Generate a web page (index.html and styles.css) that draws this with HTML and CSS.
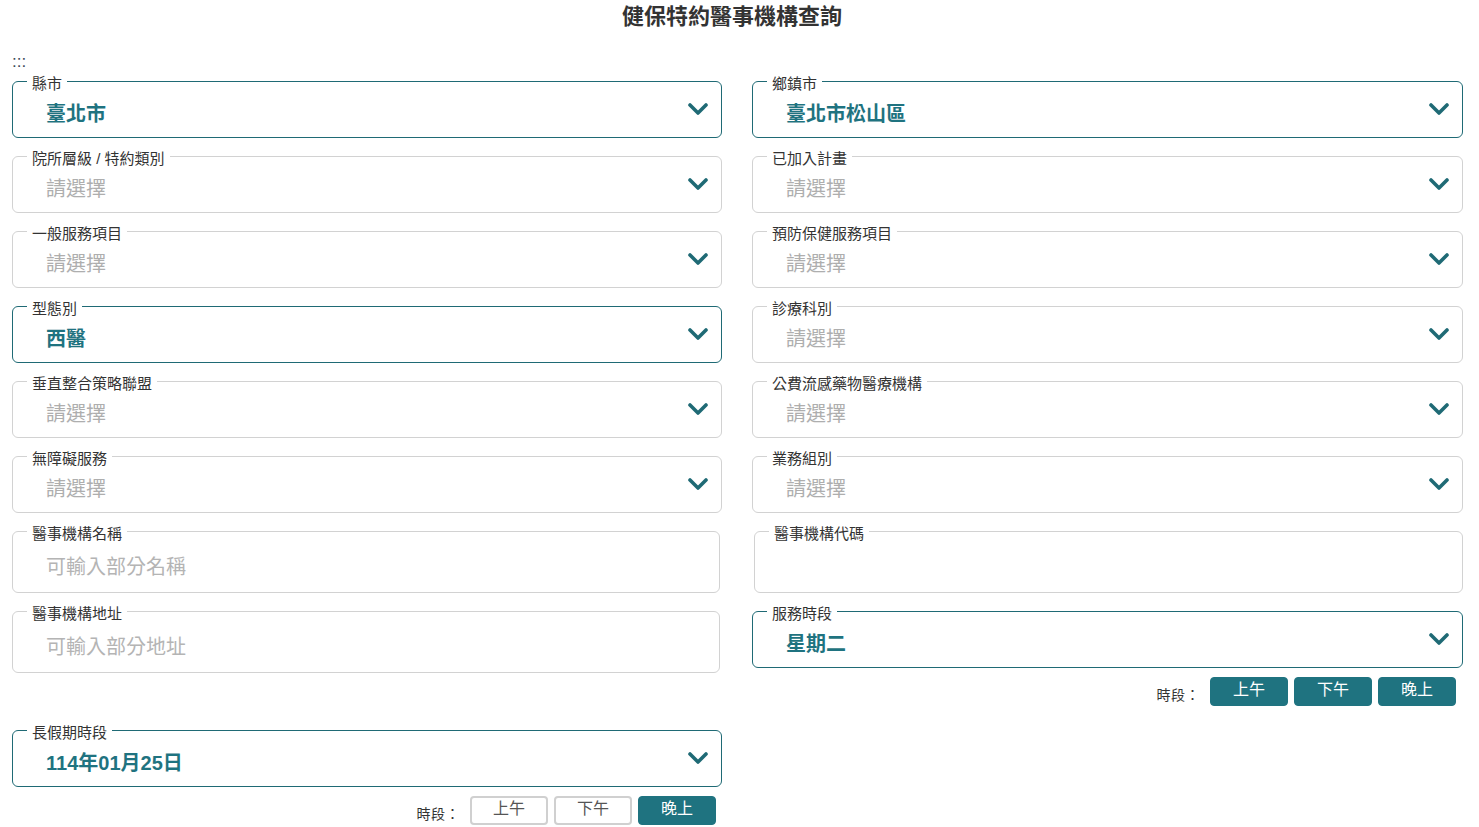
FILE: index.html
```html
<!DOCTYPE html>
<html lang="zh-Hant">
<head>
<meta charset="utf-8">
<title>健保特約醫事機構查詢</title>
<link rel="stylesheet" href="styles.css">
</head>
<body>
<div class="page">
  <h1 class="title">健保特約醫事機構查詢</h1>
  <div class="dots">:::</div>
  <div class="form">
    <fieldset class="field field-sel active">
      <legend>縣市</legend>
      <div class="row"><span class="val">臺北市</span><svg class="chev" viewBox="0 0 20 12" width="20" height="12"><polyline points="2,2 10,10 18,2"/></svg></div>
    </fieldset>
    <fieldset class="field field-sel active">
      <legend>鄉鎮市</legend>
      <div class="row"><span class="val">臺北市松山區</span><svg class="chev" viewBox="0 0 20 12" width="20" height="12"><polyline points="2,2 10,10 18,2"/></svg></div>
    </fieldset>

    <fieldset class="field field-sel">
      <legend>院所層級 / 特約類別</legend>
      <div class="row"><span class="ph">請選擇</span><svg class="chev" viewBox="0 0 20 12" width="20" height="12"><polyline points="2,2 10,10 18,2"/></svg></div>
    </fieldset>
    <fieldset class="field field-sel">
      <legend>已加入計畫</legend>
      <div class="row"><span class="ph">請選擇</span><svg class="chev" viewBox="0 0 20 12" width="20" height="12"><polyline points="2,2 10,10 18,2"/></svg></div>
    </fieldset>

    <fieldset class="field field-sel">
      <legend>一般服務項目</legend>
      <div class="row"><span class="ph">請選擇</span><svg class="chev" viewBox="0 0 20 12" width="20" height="12"><polyline points="2,2 10,10 18,2"/></svg></div>
    </fieldset>
    <fieldset class="field field-sel">
      <legend>預防保健服務項目</legend>
      <div class="row"><span class="ph">請選擇</span><svg class="chev" viewBox="0 0 20 12" width="20" height="12"><polyline points="2,2 10,10 18,2"/></svg></div>
    </fieldset>

    <fieldset class="field field-sel active">
      <legend>型態別</legend>
      <div class="row"><span class="val">西醫</span><svg class="chev" viewBox="0 0 20 12" width="20" height="12"><polyline points="2,2 10,10 18,2"/></svg></div>
    </fieldset>
    <fieldset class="field field-sel">
      <legend>診療科別</legend>
      <div class="row"><span class="ph">請選擇</span><svg class="chev" viewBox="0 0 20 12" width="20" height="12"><polyline points="2,2 10,10 18,2"/></svg></div>
    </fieldset>

    <fieldset class="field field-sel">
      <legend>垂直整合策略聯盟</legend>
      <div class="row"><span class="ph">請選擇</span><svg class="chev" viewBox="0 0 20 12" width="20" height="12"><polyline points="2,2 10,10 18,2"/></svg></div>
    </fieldset>
    <fieldset class="field field-sel">
      <legend>公費流感藥物醫療機構</legend>
      <div class="row"><span class="ph">請選擇</span><svg class="chev" viewBox="0 0 20 12" width="20" height="12"><polyline points="2,2 10,10 18,2"/></svg></div>
    </fieldset>

    <fieldset class="field field-sel">
      <legend>無障礙服務</legend>
      <div class="row"><span class="ph">請選擇</span><svg class="chev" viewBox="0 0 20 12" width="20" height="12"><polyline points="2,2 10,10 18,2"/></svg></div>
    </fieldset>
    <fieldset class="field field-sel">
      <legend>業務組別</legend>
      <div class="row"><span class="ph">請選擇</span><svg class="chev" viewBox="0 0 20 12" width="20" height="12"><polyline points="2,2 10,10 18,2"/></svg></div>
    </fieldset>

    <fieldset class="field field-text left-text">
      <legend>醫事機構名稱</legend>
      <input class="inp" type="text" placeholder="可輸入部分名稱">
    </fieldset>
    <fieldset class="field field-text right-text">
      <legend>醫事機構代碼</legend>
      <input class="inp" type="text">
    </fieldset>

    <fieldset class="field field-text left-text">
      <legend>醫事機構地址</legend>
      <input class="inp" type="text" placeholder="可輸入部分地址">
    </fieldset>
    <div class="cell">
      <fieldset class="field field-sel active">
        <legend>服務時段</legend>
        <div class="row"><span class="val">星期二</span><svg class="chev" viewBox="0 0 20 12" width="20" height="12"><polyline points="2,2 10,10 18,2"/></svg></div>
      </fieldset>
      <div class="bar bar-right">
        <span class="bar-label">時段：</span>
        <button class="btn on">上午</button>
        <button class="btn on">下午</button>
        <button class="btn on">晚上</button>
      </div>
    </div>

    <div class="cell">
      <fieldset class="field field-sel active">
        <legend>長假期時段</legend>
        <div class="row"><span class="val">114年01月25日</span><svg class="chev" viewBox="0 0 20 12" width="20" height="12"><polyline points="2,2 10,10 18,2"/></svg></div>
      </fieldset>
      <div class="bar bar-left">
        <span class="bar-label">時段：</span>
        <button class="btn off">上午</button>
        <button class="btn off">下午</button>
        <button class="btn on">晚上</button>
      </div>
    </div>
    <div class="cell"></div>
  </div>
</div>
</body>
</html>
```

FILE: styles.css
```css
* { box-sizing: border-box; }
html, body { margin: 0; padding: 0; background: #fff; }
body {
  font-family: "Liberation Sans", "Noto Sans CJK TC", sans-serif;
  color: #333;
}
.page {
  padding: 0 16px 0 12px;
}
.title {
  margin: 0;
  padding: 5px 11px 0 0;
  font-size: 22px;
  line-height: 24px;
  font-weight: bold;
  text-align: center;
  color: #333;
}
.dots {
  margin-top: 25px;
  margin-bottom: 1px;
  font-size: 17px;
  line-height: 16px;
  letter-spacing: 0;
  color: #3d4b5a;
}
.form {
  display: grid;
  grid-template-columns: 710px 711px;
  column-gap: 30px;
  row-gap: 8px;
  align-items: start;
}
.field {
  margin: 0;
  padding: 0;
  border: 1px solid #d2d2d2;
  border-radius: 6px;
  min-width: 0;
}
.field.active {
  border-color: #1f6a75;
}
.field legend {
  margin-left: 14px;
  padding: 4px 5px 0;
  font-size: 15px;
  line-height: 17px;
  color: #333;
}
.field-sel .row {
  display: flex;
  align-items: center;
  justify-content: space-between;
  padding: 7px 13px 8px 33px;
  height: 45px;
}
.val {
  font-size: 20px;
  line-height: 30px;
  font-weight: bold;
  color: #1f7380;
}
.ph {
  font-size: 20px;
  line-height: 30px;
  color: #aeaeae;
}
.chev {
  display: block;
  margin-top: -10px;
  fill: none;
  stroke: #1f6a75;
  stroke-width: 3.6;
  stroke-linecap: round;
  stroke-linejoin: round;
}
.field-text {
  height: 72px;
}
.left-text { margin-right: 2px; }
.right-text { margin-left: 2px; }
.inp {
  display: block;
  width: 100%;
  border: 0;
  outline: none;
  background: transparent;
  padding: 10px 14px 0 33px;
  font-family: inherit;
  font-size: 20px;
  line-height: 30px;
  height: 40px;
  color: #333;
}
.inp::placeholder {
  color: #b4b4b4;
}
.cell { min-width: 0; }
.bar {
  display: flex;
  justify-content: flex-end;
  align-items: center;
  gap: 6px;
  margin-top: 9px;
  margin-bottom: 6px;
}
.bar-right { padding-right: 7px; }
.bar-left { padding-right: 6px; }
.bar-label {
  font-size: 14px;
  line-height: 18px;
  color: #333;
  margin-right: 4px;
  padding-top: 6px;
  letter-spacing: 0.5px;
}
.btn {
  width: 78px;
  height: 29px;
  border-radius: 4px;
  font-family: inherit;
  font-size: 16px;
  line-height: 20px;
  padding: 0 0 3px;
  cursor: pointer;
}
.btn.on {
  background: #1f7380;
  border: 1px solid #1f7380;
  color: #fff;
}
.btn.off {
  background: #fff;
  border: 2px solid #d0d0d0;
  color: #555;
}
```
